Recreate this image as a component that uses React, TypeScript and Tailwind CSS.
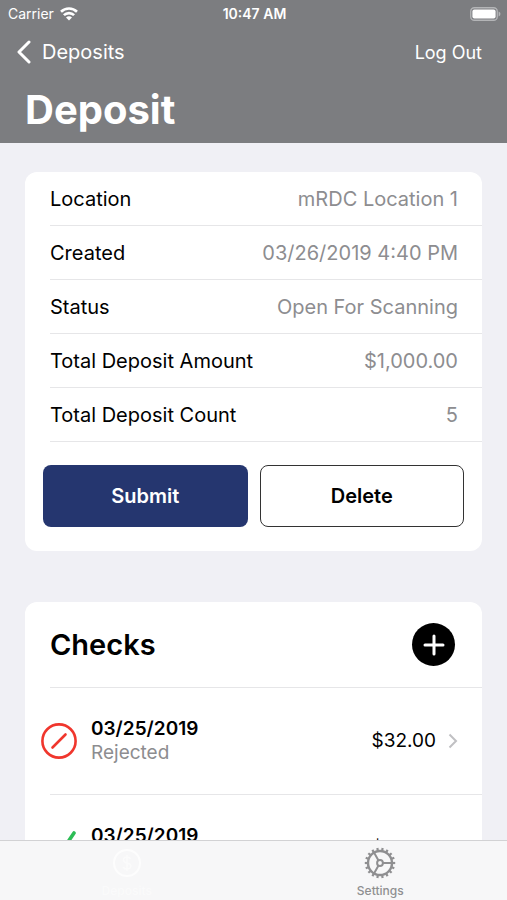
import React from 'react';

const details = [
  { label: 'Location', value: 'mRDC Location 1' },
  { label: 'Created', value: '03/26/2019 4:40 PM' },
  { label: 'Status', value: 'Open For Scanning' },
  { label: 'Total Deposit Amount', value: '$1,000.00' },
  { label: 'Total Deposit Count', value: '5' }
];

const checks = [
  { date: '03/25/2019', status: 'Rejected', amount: '$32.00' },
  { date: '03/25/2019', status: 'Accepted', amount: '$32.00' }
];

const WifiIcon = () => (
  <svg className="w-[18px] h-[14px]" viewBox="0 0 18 14" fill="none" stroke="currentColor" strokeWidth="2.6">
    <path d="M1 4.8a11.4 11.4 0 0 1 16 0" />
    <path d="M3.9 8.2a7.2 7.2 0 0 1 10.2 0" />
    <path d="M9 13.6 6 10.6a4.2 4.2 0 0 1 6 0z" fill="currentColor" stroke="none" />
  </svg>
);

const BatteryIcon = () => (
  <svg className="w-[31px] h-[14px]" viewBox="0 0 31 14" fill="none">
    <rect x="0.75" y="0.75" width="26.5" height="12.5" rx="3.6" stroke="#b4b5b7" strokeWidth="1.3" />
    <rect x="2.4" y="2.4" width="23.2" height="9.2" rx="2" fill="#fff" />
    <path d="M28.6 4.6c1.2.4 1.8 1.3 1.8 2.4s-.6 2-1.8 2.4z" fill="#b4b5b7" />
  </svg>
);

const RejectedIcon = () => (
  <svg className="w-9 h-9" viewBox="0 0 36 36" fill="none" stroke="#f0362d" strokeWidth="2.6" strokeLinecap="round">
    <circle cx="18" cy="18" r="16.6" />
    <path d="M11.5 24.5 24.5 11.5" />
  </svg>
);

const AcceptedIcon = () => (
  <svg className="w-9 h-9" viewBox="0 0 36 36" fill="none" stroke="#2dbd56" strokeWidth="3.6" strokeLinecap="round" strokeLinejoin="round">
    <path d="M4 21 13.5 32 33 3" />
  </svg>
);

const GearIcon = () => (
  <svg className="w-8 h-8" viewBox="0 0 32 32" fill="none" stroke="currentColor">
    <circle cx="16" cy="16" r="12" strokeWidth="2.4" />
    {Array.from({ length: 18 }, (_, i) => (
      <path key={i} d="M16 4.2V.8" strokeWidth="2.2" transform={`rotate(${i * 20 + 10} 16 16)`} />
    ))}
    <circle cx="16" cy="16" r="2.9" strokeWidth="2" />
    <path d="M19 16h9M14.5 13.4 10 5.6M14.5 18.6 10 26.4" strokeWidth="2" />
  </svg>
);

const CoinIcon = () => (
  <svg className="w-8 h-8" viewBox="0 0 32 32" fill="none" stroke="currentColor">
    <circle cx="16" cy="16" r="13" strokeWidth="2" />
    <path d="M19.5 12c-.6-1.4-2-2-3.5-2-2 0-3.6 1-3.6 2.9 0 4.2 7.4 1.9 7.4 6.1 0 2-1.7 3-3.8 3-1.8 0-3.3-.8-3.8-2.3M16 8v16" strokeWidth="1.6" opacity="0.6" />
  </svg>
);

const App: React.FC = () => {
  return (
    <div className="h-screen flex flex-col bg-[#f0f0f5] text-black font-[Inter,sans-serif]">
      {/* Header */}
      <header className="shrink-0 bg-[#7c7d80] text-white pb-1">
        <div className="grid grid-cols-3 items-center h-7 pl-2 pr-1.5 text-[14px] leading-5">
          <div className="flex items-center gap-1.5">
            <span>Carrier</span>
            <WifiIcon />
          </div>
          <span className="text-center font-semibold whitespace-nowrap">10:47 AM</span>
          <div className="flex justify-end">
            <BatteryIcon />
          </div>
        </div>
        <div className="flex items-center justify-between h-12 pl-4 pr-[25px] text-[20px]">
          <a href="#deposits" className="flex items-center gap-2.5">
            <svg className="w-4 h-6" viewBox="0 0 16 24" fill="none" stroke="currentColor" strokeWidth="3" strokeLinecap="round" strokeLinejoin="round">
              <path d="M13 2 3 12l10 10" />
            </svg>
            Deposits
          </a>
          <button type="button" className="text-[18px]">Log Out</button>
        </div>
        <h1 className="px-[25px] pt-[11px] pb-1.5 text-[40px] leading-[46px] font-bold">Deposit</h1>
      </header>

      <main className="flex-1 min-h-0 overflow-y-auto [scrollbar-width:none] px-[25px] pt-[29px]">
        {/* Deposit details */}
        <section className="bg-white rounded-xl pb-6">
          <dl className="pl-[25px] text-[20px]">
            {details.map((item) => (
              <div key={item.label} className="flex items-center justify-between h-[54px] pr-6 border-b border-[#e6e6e8]">
                <dt>{item.label}</dt>
                <dd className="text-[#8d8d90]">{item.value}</dd>
              </div>
            ))}
          </dl>
          <div className="grid grid-cols-2 gap-3 px-[18px] pt-[23px] text-[20px] font-semibold">
            <button type="button" className="h-[62px] rounded-lg bg-[#25366f] text-white">Submit</button>
            <button type="button" className="h-[62px] rounded-lg border border-[#333333] bg-white">Delete</button>
          </div>
        </section>

        {/* Checks */}
        <section className="mt-[51px] bg-white rounded-xl">
          <div className="flex items-center justify-between h-[86px] ml-[25px] pr-[27px] border-b border-[#e6e6e8]">
            <h2 className="text-[29px] font-semibold">Checks</h2>
            <button type="button" aria-label="Add check" className="flex items-center justify-center w-[43px] h-[43px] rounded-full bg-black text-white">
              <svg className="w-6 h-6" viewBox="0 0 24 24" fill="none" stroke="currentColor" strokeWidth="3" strokeLinecap="round">
                <path d="M12 3v18M3 12h18" />
              </svg>
            </button>
          </div>
          <ul>
            {checks.map((check, index) => (
              <li key={index}>
                <a href="#check" className="flex items-center h-[106px] pl-4 pr-6">
                  {check.status === 'Rejected' ? <RejectedIcon /> : <AcceptedIcon />}
                  <div className="ml-3.5 flex-1 text-[19px] leading-6">
                    <p className="font-semibold">{check.date}</p>
                    <p className="text-[#8d8d90]">{check.status}</p>
                  </div>
                  <span className="text-[19px]">{check.amount}</span>
                  <svg className="ml-3 w-2.5 h-4" viewBox="0 0 10 16" fill="none" stroke="#c0c0c3" strokeWidth="2">
                    <path d="M1.5 1.5 8 8l-6.5 6.5" />
                  </svg>
                </a>
                <div className="ml-[25px] border-b border-[#e6e6e8]" />
              </li>
            ))}
          </ul>
        </section>
      </main>

      {/* Tab bar */}
      <nav className="shrink-0 grid grid-cols-2 h-[60px] pt-1.5 border-t border-[#d2d2d4] bg-[#f7f7f8] text-[12px] leading-4 font-medium">
        <a href="#deposits" className="flex flex-col items-center gap-1 text-[#fdfdfd]">
          <CoinIcon />
          <span className="opacity-60">Deposits</span>
        </a>
        <a href="#settings" className="flex flex-col items-center gap-1 text-[#8f8f91]">
          <GearIcon />
          <span>Settings</span>
        </a>
      </nav>
    </div>
  );
};

export default App;
